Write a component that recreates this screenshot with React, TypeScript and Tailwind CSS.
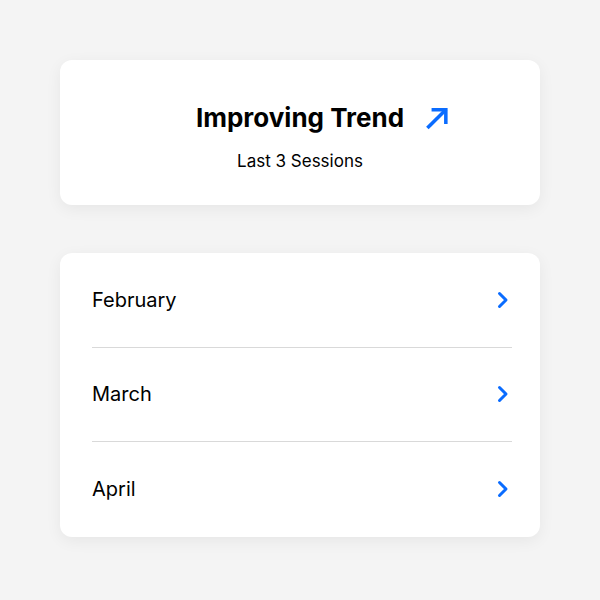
const months = ["February", "March", "April"];

function TrendArrow() {
  return (
    <svg
      viewBox="0 0 24 24"
      className="absolute left-full top-1/2 ml-[21px] h-[25px] w-[25px] -translate-y-1/2 text-[#0a6cff]"
      fill="none"
      stroke="currentColor"
      strokeWidth={3.4}
      strokeLinecap="square"
      strokeLinejoin="miter"
    >
      <path d="M3.5 20.5 L19 5" />
      <path d="M8 4 H20 V16" />
    </svg>
  );
}

function Chevron() {
  return (
    <svg
      viewBox="0 0 12 18"
      className="h-[18px] w-[12px] text-[#0a6cff]"
      fill="none"
      stroke="currentColor"
      strokeWidth={3}
      strokeLinecap="round"
      strokeLinejoin="round"
    >
      <path d="M2.5 2.5 L9 9 L2.5 15.5" />
    </svg>
  );
}

export default function App() {
  return (
    <div
      className="min-h-screen w-full bg-[#f4f4f4] px-[60px] pt-[60px]"
      style={{ fontFamily: "Inter, 'Noto Sans', sans-serif" }}
    >
      <div className="flex h-[145px] flex-col items-center justify-center rounded-xl bg-white pt-[9px] shadow-[0_4px_16px_rgba(0,0,0,0.06)]">
        <div className="relative flex items-center">
          <h1 className="text-[26px] font-bold leading-none text-black">Improving Trend</h1>
          <TrendArrow />
        </div>
        <p className="mt-[22px] text-[17px] leading-none text-black">Last 3 Sessions</p>
      </div>

      <div className="mt-[48px] rounded-xl bg-white pl-[32px] pr-[28px] shadow-[0_4px_16px_rgba(0,0,0,0.06)]">
        {months.map((m, i) => (
          <div
            key={m}
            className={`flex h-[94.5px] items-center justify-between pr-[3px] ${
              i < months.length - 1 ? "border-b border-[#d9d9d9]" : ""
            }`}
          >
            <span className="text-[20px] text-black">{m}</span>
            <Chevron />
          </div>
        ))}
      </div>
    </div>
  );
}
